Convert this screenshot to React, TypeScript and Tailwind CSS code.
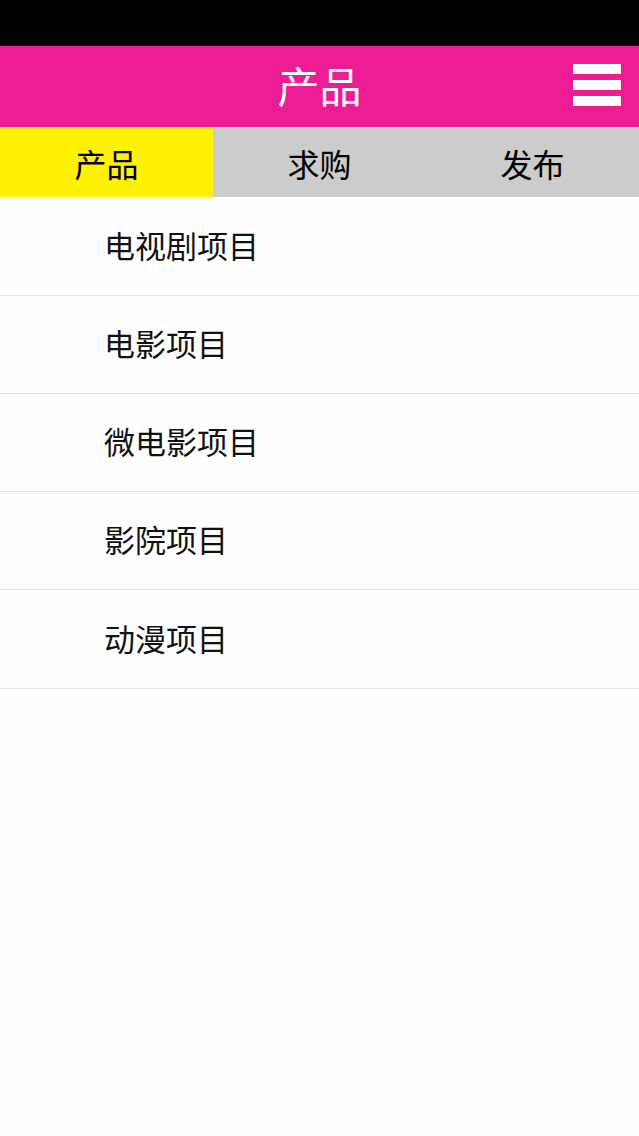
import React from "react";

const font = { fontFamily: '"Noto Sans CJK SC", "Noto Sans", sans-serif' };

export default function App() {
  const items = ["电视剧项目", "电影项目", "微电影项目", "影院项目", "动漫项目"];
  const heights = ["h-[99px]", "h-[98px]", "h-[98px]", "h-[98px]", "h-[99px]"];
  return (
    <div className="w-[639px] h-[1136px] bg-[#fefefe] flex flex-col" style={font}>
      <div className="h-[46px] bg-black" />
      <div className="h-[81px] bg-[#ec1c94] flex items-center justify-center relative">
        <span className="text-white text-[42px] leading-none -mt-[3px]">产品</span>
        <div className="absolute right-[18px] top-[18px] flex flex-col gap-[6px]">
          <div className="w-[48px] h-[10px] bg-white" />
          <div className="w-[48px] h-[10px] bg-white" />
          <div className="w-[48px] h-[10px] bg-white" />
        </div>
      </div>
      <div className="h-[70px] flex border-t border-[#e6e6e6]">
        <div className="w-[213px] bg-[#fff200] flex items-center justify-center text-black text-[32px]">产品</div>
        <div className="w-[213px] bg-[#cccccc] flex items-center justify-center text-black text-[32px]">求购</div>
        <div className="flex-1 bg-[#cccccc] flex items-center justify-center text-black text-[32px]">发布</div>
      </div>
      <div className="flex flex-col">
        {items.map((t, i) => (
          <div key={t} className={`${heights[i]} flex items-center pl-[104px] border-b border-[#e2e2e2] text-[31px] text-[#111]`}>
            <span className="-mt-[2px]">{t}</span>
          </div>
        ))}
      </div>
    </div>
  );
}
